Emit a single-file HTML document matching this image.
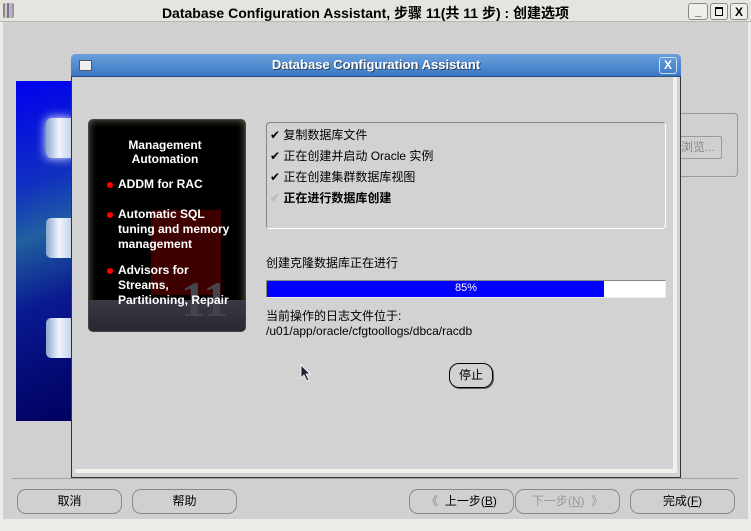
<!DOCTYPE html>
<html><head><meta charset="utf-8"><style>
*{margin:0;padding:0;box-sizing:border-box}
body{width:751px;height:531px;overflow:hidden;background:#d0d0d0;font-family:"Liberation Sans","Noto Sans CJK SC",sans-serif;position:relative;font-size:12px;color:#000}
.abs{position:absolute}
.btn{position:absolute;border:1px solid #8a8a8a;border-radius:9px;background:#d0d0d0;text-align:center;line-height:23px;font-size:12px}
.bl{position:absolute;left:29px;color:#fff;font-weight:bold;font-size:12px;line-height:15px;width:122px}
.bl span{position:absolute;left:-11px;top:5px;width:6px;height:6px;background:#f00;border-radius:50%}
</style></head><body>
<div class="abs" style="left:0;top:0;width:751px;height:22px;background:#e6e4de;border-bottom:1px solid #b8b6b0"></div>
<div class="abs" style="left:3px;top:3px;width:11px;height:15px;background:linear-gradient(90deg,#888 0 2px,#ccc 2px 4px,#777 4px 6px,#caa6e0 6px 9px,#999 9px);border-radius:2px"></div>
<div class="abs" style="left:-10px;top:3px;width:751px;text-align:center;font-weight:bold;font-size:14px">Database Configuration Assistant, 步骤 11(共 11 步) : 创建选项</div>
<div class="abs" style="left:688px;top:3px;width:20px;height:17px;border:1px solid #888;border-radius:3px;background:#f0eee9;font-size:11px;font-weight:bold;text-align:center;line-height:16px">_</div>
<div class="abs" style="left:710px;top:3px;width:18px;height:17px;border:1px solid #888;border-radius:3px;background:#f0eee9;text-align:center"><div style="width:8px;height:9px;border:1px solid #000;border-top-width:2px;margin:3px auto"></div></div>
<div class="abs" style="left:730px;top:3px;width:18px;height:17px;border:1px solid #888;border-radius:3px;background:#f0eee9;font-size:12px;font-weight:bold;text-align:center;line-height:16px">X</div>
<div class="abs" style="left:0;top:22px;width:3px;height:509px;background:#ecebe6"></div>
<div class="abs" style="left:0;top:519px;width:751px;height:12px;background:#ecebe6"></div>
<div class="abs" style="left:748px;top:22px;width:3px;height:509px;background:#ecebe6"></div>
<div class="abs" style="left:16px;top:81px;width:56px;height:340px;background:linear-gradient(160deg,#0000f0 0%,#1030c0 30%,#2060a0 45%,#0a1890 65%,#000060 100%)"></div>
<div class="abs" style="left:46px;top:118px;width:26px;height:40px;background:linear-gradient(90deg,#8aa8cc,#f0f4ff,#c0d0e8);border-radius:5px 0 0 5px;box-shadow:0 0 10px #fff"></div>
<div class="abs" style="left:46px;top:218px;width:26px;height:40px;background:linear-gradient(90deg,#8aa8cc,#f0f4ff,#c0d0e8);border-radius:5px 0 0 5px"></div>
<div class="abs" style="left:46px;top:318px;width:26px;height:40px;background:linear-gradient(90deg,#8aa8cc,#f0f4ff,#c0d0e8);border-radius:5px 0 0 5px"></div>
<div class="abs" style="left:670px;top:113px;width:68px;height:64px;border:1px solid #999;border-left:none;border-radius:0 4px 4px 0"></div>
<div class="abs" style="left:676px;top:136px;width:46px;height:23px;border:1px solid #999;border-radius:2px;color:#888;line-height:21px;padding-left:4px">浏览...</div>
<div class="abs" style="left:12px;top:478px;width:726px;height:1px;background:#a0a0a0"></div>
<div class="btn" style="left:17px;top:489px;width:105px;height:25px">取消</div>
<div class="btn" style="left:132px;top:489px;width:105px;height:25px">帮助</div>
<div class="btn" style="left:409px;top:489px;width:105px;height:25px"><span style="color:#888">《</span>&nbsp; 上一步(<u>B</u>)</div>
<div class="btn" style="left:515px;top:489px;width:105px;height:25px;color:#999">下一步(<u>N</u>) &nbsp;》</div>
<div class="btn" style="left:630px;top:489px;width:105px;height:25px">完成(<u>F</u>)</div>
<div class="abs" style="left:71px;top:54px;width:610px;height:424px;background:#d2d2d2;border:1px solid #333;border-top:none;border-radius:5px 5px 0 0">
 <div class="abs" style="left:-1px;top:0;width:610px;height:23px;background:linear-gradient(#6aa0dc,#3a78c4);border-radius:5px 5px 0 0;border-bottom:1px solid #2a4f80"></div>
 <div class="abs" style="left:7px;top:6px;width:13px;height:11px;background:#f0f0f0;border:1px solid #555"></div>
 <div class="abs" style="left:0;top:3px;width:608px;text-align:center;color:#fff;font-weight:bold;font-size:13px;text-shadow:1px 1px 0 #345">Database Configuration Assistant</div>
 <div class="abs" style="left:587px;top:3px;width:18px;height:17px;border:1px solid #cde;border-radius:3px;color:#fff;font-weight:bold;text-align:center;line-height:15px;font-size:12px">X</div>
 <div class="abs" style="left:3px;top:415px;width:602px;height:4px;background:#f2f0eb"></div>
 <div class="abs" style="left:601px;top:23px;width:4px;height:396px;background:#f2f0eb"></div>
</div>
<div class="abs" style="left:88px;top:119px;width:158px;height:213px;background:#000;border:1px solid #444;border-radius:5px;box-shadow:inset 0 0 8px #665;overflow:hidden">
 <div class="abs" style="left:62px;top:90px;width:70px;height:85px;background:#4a0000;opacity:.85"></div>
 <div class="abs" style="left:0;top:180px;width:156px;height:36px;background:linear-gradient(#3a3a46,#25252e)"></div>
 <div class="abs" style="left:92px;top:150px;font-size:50px;font-weight:bold;color:#44444c;font-family:'Liberation Serif',serif">11</div>
 <div class="abs" style="left:0;top:18px;width:152px;text-align:center;color:#fff;font-weight:bold;font-size:12px;line-height:14px">Management<br>Automation</div>
 <div class="bl" style="top:57px"><span></span>ADDM for RAC</div>
 <div class="bl" style="top:87px;width:118px"><span></span>Automatic SQL tuning and memory management</div>
 <div class="bl" style="top:143px;width:118px"><span></span>Advisors for<br>Streams,<br>Partitioning, Repair</div>
</div>
<div class="abs" style="left:266px;top:122px;width:400px;height:107px;border:1px solid #888;border-right-color:#fff;border-bottom-color:#fff;border-radius:4px;padding:2px 3px;line-height:21px;font-size:12px">
 <div>✔ 复制数据库文件</div>
 <div>✔ 正在创建并启动 Oracle 实例</div>
 <div>✔ 正在创建集群数据库视图</div>
 <div style="font-weight:bold"><span style="color:#bbb">✔</span> 正在进行数据库创建</div>
</div>
<div class="abs" style="left:266px;top:254px">创建克隆数据库正在进行</div>
<div class="abs" style="left:266px;top:280px;width:400px;height:18px;background:#fff;border:1px solid #888;border-right-color:#eee;border-bottom-color:#eee">
 <div style="width:337px;height:16px;background:#0000ff"></div>
 <div class="abs" style="left:0;top:1px;width:398px;text-align:center;color:#fff;font-size:11px">85%</div>
</div>
<div class="abs" style="left:266px;top:309px;line-height:15px">当前操作的日志文件位于:<br>/u01/app/oracle/cfgtoollogs/dbca/racdb</div>
<div class="abs" style="left:449px;top:363px;width:44px;height:25px;border:1px solid #000;border-radius:10px;text-align:center;line-height:23px;box-shadow:1px 1px 0 #666">停止</div>
<svg class="abs" style="left:300px;top:364px" width="12" height="18"><path d="M1 1 L1 14 L4 11 L7 17 L9 16 L6 10 L10 10 Z" fill="#223" stroke="#fff" stroke-width="0.8"/></svg>
</body></html>
